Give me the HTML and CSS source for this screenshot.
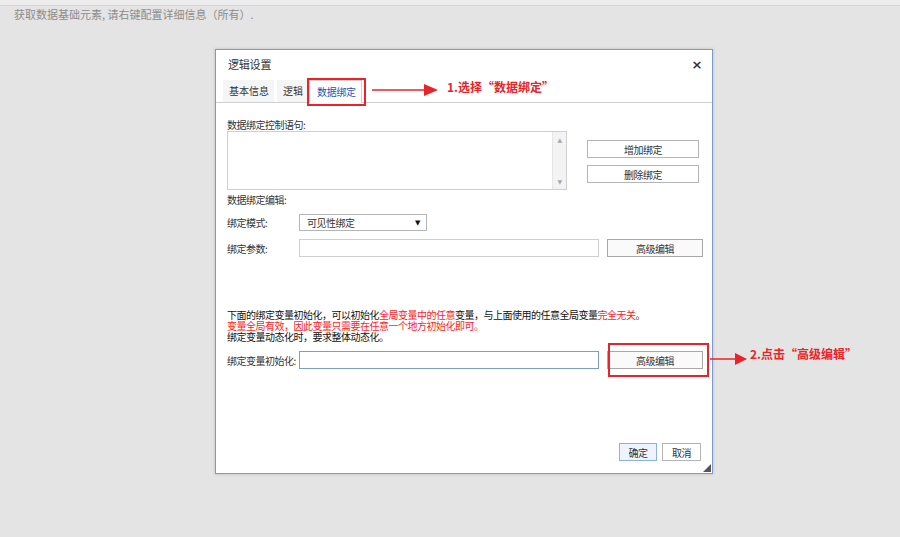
FILE: index.html
```html
<!DOCTYPE html>
<html lang="zh">
<head>
<meta charset="utf-8">
<link rel="stylesheet" href="styles.css">
</head>
<body>
<div class="topbar"></div>
<div class="hint">获取数据基础元素, 请右键配置详细信息（所有）.</div>

<div class="dialog">
  <div class="dlg-head">
    <span class="dlg-title">逻辑设置</span>
    <span class="dlg-close">×</span>
  </div>
  <div class="tabs">
    <div class="tab t1">基本信息</div>
    <div class="tab t2">逻辑</div>
    <div class="tab active">数据绑定</div>
  </div>
  <div class="dlg-body">
    <div class="label first">数据绑定控制语句:</div>
    <div class="ctrl-row">
      <div class="textarea">
        <div class="scroll"><span class="up">▲</span><span class="down">▼</span></div>
      </div>
      <div class="btn-col">
        <div class="btn wide">增加绑定</div>
        <div class="btn wide">删除绑定</div>
      </div>
    </div>
    <div class="label sect">数据绑定编辑:</div>
    <div class="row r-mode">
      <div class="row-label">绑定模式:</div>
      <div class="select"><span>可见性绑定</span><span class="caret">▼</span></div>
    </div>
    <div class="row r-param">
      <div class="row-label">绑定参数:</div>
      <div class="input"></div>
      <div class="btn adv">高级编辑</div>
    </div>
    <div class="notes">
      <div class="nline">下面的绑定变量初始化，可以初始化<span class="red">全局变量中的任意</span>变量，与上面使用的任意全局变量<span class="red">完全无关</span>。</div>
      <div class="nline red">变量全局有效，因此变量只需要在任意一个地方初始化即可。</div>
      <div class="nline">绑定变量动态化时，要求整体动态化。</div>
    </div>
    <div class="row r-init">
      <div class="row-label">绑定变量初始化:</div>
      <div class="input focus"></div>
      <div class="btn adv">高级编辑</div>
    </div>
  </div>
  <div class="dlg-foot">
    <div class="btn ok">确定</div>
    <div class="btn cancel">取消</div>
  </div>
  <div class="grip"></div>
</div>

<div class="mark mark1"></div>
<svg class="arrow arrow1" width="70" height="14" viewBox="0 0 70 14"><line x1="0" y1="7" x2="54" y2="7" stroke="#e8232a" stroke-width="1.5"/><polygon points="52,1 66,7 52,13" fill="#e8232a"/></svg>
<div class="note note1">1.选择“数据绑定”</div>

<div class="mark mark2"></div>
<svg class="arrow arrow2" width="40" height="14" viewBox="0 0 40 14"><line x1="0" y1="6" x2="26" y2="6" stroke="#e8232a" stroke-width="1.5"/><polygon points="25,0 37,6 25,12" fill="#e8232a"/></svg>
<div class="note note2">2.点击“高级编辑”</div>
</body>
</html>
```
FILE: styles.css
```css
html, body {
  margin: 0;
  padding: 0;
}
body {
  width: 900px;
  height: 537px;
  background: #e4e4e4;
  font-family: "Noto Sans CJK SC", "Liberation Sans", sans-serif;
  position: relative;
  overflow: hidden;
}
.topbar {
  height: 5px;
  background: #ececec;
  border-bottom: 1px solid #d4d4d4;
}
.hint {
  padding-left: 14px;
  margin-top: 1px;
  font-size: 11px;
  line-height: 14px;
  color: #8c8c8c;
}
.dialog {
  position: absolute;
  left: 215px;
  top: 49px;
  width: 498px;
  height: 425px;
  box-sizing: border-box;
  background: #fff;
  border: 1px solid #7c9dcc;
  box-shadow: 0 0 3px rgba(0, 0, 0, 0.18);
  display: flex;
  flex-direction: column;
  color: #333;
  font-size: 10px;
  letter-spacing: -0.5px;
}
.dlg-head {
  height: 28px;
  display: flex;
  align-items: center;
  justify-content: space-between;
  padding: 0 10px 0 12px;
}
.dlg-title {
  font-size: 11px;
  color: #333;
  letter-spacing: -0.2px;
}
.dlg-close {
  font-size: 13px;
  font-weight: bold;
  color: #333;
  font-family: "DejaVu Sans", sans-serif;
}
.tabs {
  margin-top: 2px;
  height: 22px;
  display: flex;
  align-items: stretch;
  padding-left: 7px;
  border-bottom: 1px solid #cfcfcf;
}
.tab {
  display: flex;
  align-items: center;
  box-sizing: border-box;
  color: #333;
  background: #f5f5f5;
  line-height: 12px;
  letter-spacing: 0;
}
.tab.t1 {
  width: 51px;
  padding-left: 6px;
}
.tab.t2 {
  width: 32px;
  padding-left: 6px;
  margin-left: 3px;
}
.tab.active {
  width: 53px;
  background: #fff;
  color: #1a55b0;
  padding-left: 7px;
  border: 1px solid #cfcfcf;
  border-bottom: none;
  margin-bottom: -1px;
  letter-spacing: -0.3px;
}
.dlg-body {
  padding: 0 9px 0 11px;
  flex: 1;
  display: flex;
  flex-direction: column;
}
.label {
  line-height: 12px;
}
.label.first {
  margin-top: 16px;
}
.label.sect {
  margin-top: 4px;
}
.ctrl-row {
  display: flex;
  gap: 20px;
}
.textarea {
  width: 340px;
  height: 59px;
  box-sizing: border-box;
  border: 1px solid #cfcfcf;
  background: #fff;
  display: flex;
  justify-content: flex-end;
}
.scroll {
  width: 13px;
  background: #f3f3f3;
  border-left: 1px solid #e6e6e6;
  display: flex;
  flex-direction: column;
  justify-content: space-between;
  align-items: center;
  font-size: 6px;
  color: #a8a8a8;
  padding: 4px 0;
  font-family: "DejaVu Sans", sans-serif;
}
.btn-col {
  margin-top: 9px;
  display: flex;
  flex-direction: column;
  gap: 7px;
}
.btn {
  height: 18px;
  box-sizing: border-box;
  border: 1px solid #b4b4b4;
  background: #fff;
  display: flex;
  align-items: center;
  justify-content: center;
  color: #333;
  font-size: 10px;
}
.btn.wide {
  width: 112px;
}
.row {
  display: flex;
  align-items: center;
}
.row-label {
  width: 72px;
  flex: none;
  white-space: nowrap;
}
.r-mode {
  margin-top: 8px;
}
.r-param {
  margin-top: 8px;
}
.select {
  width: 128px;
  height: 17px;
  box-sizing: border-box;
  border: 1px solid #b4b4b4;
  display: flex;
  align-items: center;
  justify-content: space-between;
  padding: 0 6px 0 7px;
}
.caret {
  font-size: 7px;
  color: #111;
  font-family: "DejaVu Sans", sans-serif;
}
.input {
  width: 300px;
  height: 18px;
  box-sizing: border-box;
  border: 1px solid #cfcfcf;
  background: #fff;
}
.input.focus {
  border-color: #7c9dcc;
}
.btn.adv {
  width: 96px;
  margin-left: 8px;
  border-color: #a8a8a8;
  background: #fafafa;
}
.notes {
  margin-top: 52px;
  color: #111;
}
.nline {
  height: 11px;
  line-height: 11px;
  white-space: nowrap;
}
.red {
  color: #ff1a1a;
}
.r-init {
  margin-top: 9px;
}
.dlg-foot {
  display: flex;
  justify-content: flex-end;
  gap: 5px;
  padding: 0 11px 12px 0;
}
.btn.ok {
  width: 38px;
  background: #eef4fd;
  border-color: #8eb0e2;
}
.btn.cancel {
  width: 39px;
}
.grip {
  position: absolute;
  right: 1px;
  bottom: 1px;
  width: 0;
  height: 0;
  border-left: 8px solid transparent;
  border-bottom: 8px solid #555;
}
.mark {
  position: absolute;
  border: 2px solid #e8232a;
  box-sizing: border-box;
}
.mark1 {
  left: 307px;
  top: 78px;
  width: 59px;
  height: 28px;
}
.mark2 {
  left: 608px;
  top: 343px;
  width: 101px;
  height: 34px;
}
.arrow {
  position: absolute;
}
.arrow1 {
  left: 372px;
  top: 83px;
}
.arrow2 {
  left: 710px;
  top: 353px;
}
.note {
  position: absolute;
  color: #e8232a;
  font-weight: bold;
  font-size: 12px;
  line-height: 14px;
  white-space: nowrap;
}
.note1 {
  left: 447px;
  top: 80px;
}
.note2 {
  left: 750px;
  top: 347px;
}
```
